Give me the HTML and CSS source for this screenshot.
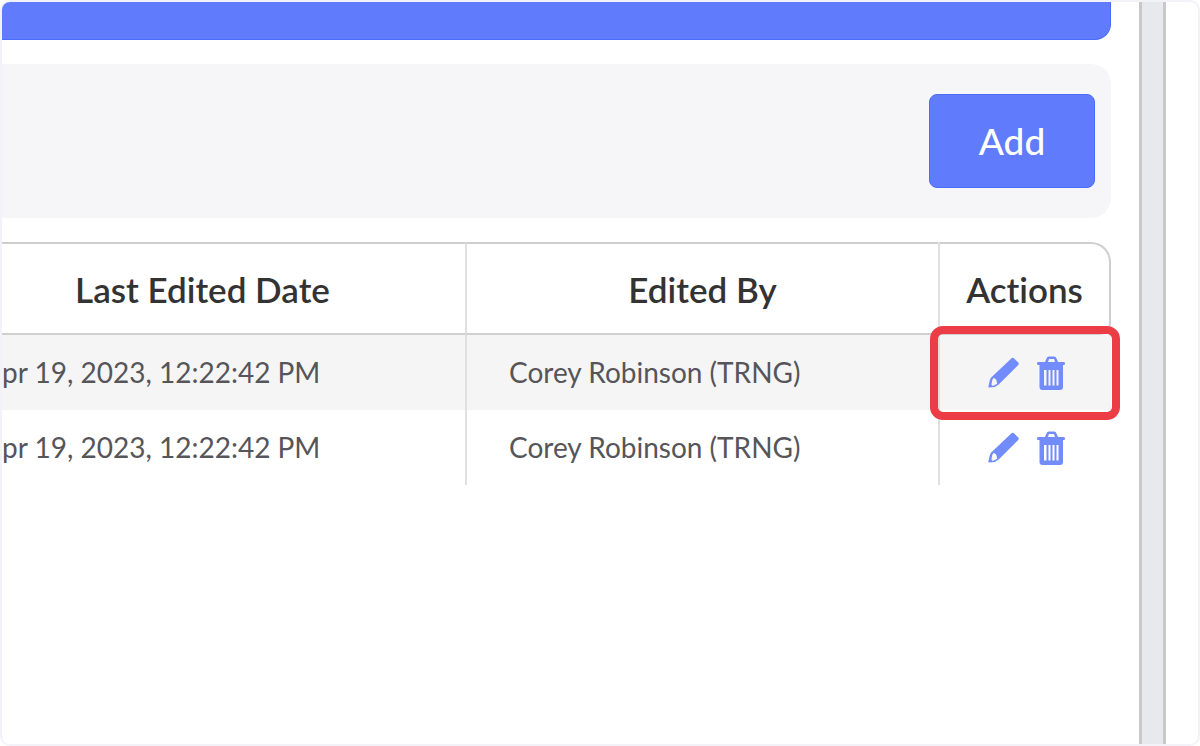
FILE: index.html
```html
<!DOCTYPE html>
<html lang="en">
<head>
  <meta charset="UTF-8" />
  <meta name="viewport" content="width=device-width, initial-scale=1.0" />
  <title>Edit History</title>
  <link rel="stylesheet" href="styles.css">
</head>
<body>
  <svg class="sprite" aria-hidden="true">
    <symbol id="pencil" viewBox="0 0 32 32">
      <path fill-rule="evenodd" d="M24 1.500 Q25.500 0 27 1.500 L31 5.500 Q32.500 7 31 8.500 L11 28.500 L7 31 L1 31.500 Q0 31.500 .5 30 L2 23.500 L3 21.500 Z M4.500 23.500 L3.500 28.500 L5 30 L9.500 27.500 L8.500 23.500 L6 21.500 Z" />
    </symbol>
    <symbol id="trash" viewBox="0 0 28 34">
      <path fill-rule="evenodd" d="M8 6 L9.500 2.500 Q10 .5 12 .5 H17 Q19 .5 19.500 2.500 L21 6 H27 Q28 6 28 7.500 Q28 9 27 9 H26 V31 Q26 34 23 34 H5.500 Q2.500 34 2.500 31 V9 H1 Q0 9 0 7.500 Q0 6 1 6 Z M11 6 H18 L17 3 H12 Z M7 14 V29.500 H9.500 V14 Z M11.500 14 V29.500 H13.500 V14 Z M15.500 14 V29.500 H17.500 V14 Z M19.500 14 V29.500 H21.500 V14 Z" />
    </symbol>
  </svg>

  <div class="frame">
    <main class="content">
      <div class="banner"></div>

      <div class="toolbar">
        <button class="add-btn" type="button">Add</button>
      </div>

      <table class="history">
        <colgroup>
          <col>
          <col class="col-editor">
          <col class="col-actions">
        </colgroup>
        <thead>
          <tr>
            <th class="date" scope="col">Last Edited Date</th>
            <th scope="col">Edited By</th>
            <th scope="col">Actions</th>
          </tr>
        </thead>
        <tbody>
          <tr class="striped">
            <td class="date">pr 19, 2023, 12:22:42 PM</td>
            <td>Corey Robinson (TRNG)</td>
            <td class="actions">
              <div class="icons">
                <button type="button" aria-label="Edit"><svg class="pencil"><use href="#pencil" /></svg></button>
                <button type="button" aria-label="Delete"><svg class="trash"><use href="#trash" /></svg></button>
              </div>
              <div class="highlight"></div>
            </td>
          </tr>
          <tr>
            <td class="date">pr 19, 2023, 12:22:42 PM</td>
            <td>Corey Robinson (TRNG)</td>
            <td class="actions">
              <div class="icons">
                <button type="button" aria-label="Edit"><svg class="pencil"><use href="#pencil" /></svg></button>
                <button type="button" aria-label="Delete"><svg class="trash"><use href="#trash" /></svg></button>
              </div>
            </td>
          </tr>
        </tbody>
      </table>
    </main>
    <div class="gutter"></div>
    <aside class="side"></aside>
  </div>
</body>
</html>
```

FILE: styles.css
```css
* {
  box-sizing: border-box;
}

body {
  margin: 0;
  background: #fff;
  color: #55555a;
  font-family: Lato, sans-serif;
  font-variant-ligatures: none;
}

.sprite {
  display: none;
}

.frame {
  display: flex;
  min-height: 100vh;
  border: 2px solid #f3f2f8;
  border-radius: 10px;
  overflow: hidden;
}

.content {
  flex: 1;
  display: flex;
  flex-direction: column;
  gap: 24px;
  padding-right: 28px;
}

.gutter {
  width: 27px;
  background: #e8e9ed;
  border: solid #c8c8ca;
  border-width: 0 3px;
}

.side {
  width: 32px;
}

.banner {
  height: 38px;
  background: #607cfd;
  border: solid #4a6cfb;
  border-width: 0 1px 1px 0;
  border-bottom-right-radius: 16px;
}

.toolbar {
  display: flex;
  justify-content: flex-end;
  padding: 30px 16px;
  background: #f6f6f9;
  border-radius: 0 20px 20px 0;
}

.add-btn {
  width: 166px;
  height: 94px;
  padding: 0 0 2px;
  background: #607cfd;
  border: 1px solid #4a6cfb;
  border-radius: 8px;
  color: #fff;
  font-family: inherit;
  font-size: 37px;
  font-weight: 500;
}

.history {
  width: 100%;
  table-layout: fixed;
  border-collapse: separate;
  border-spacing: 0;
}

.col-editor {
  width: 473px;
}

.col-actions {
  width: 173px;
}

th {
  height: 93px;
  padding: 0;
  border: solid #cfcfcf;
  border-width: 2px 0;
  color: #333;
  font-size: 35px;
  font-weight: 600;
}

th.date {
  padding: 0 62px 0 0;
}

th:last-child {
  border-right-width: 2px;
  border-radius: 0 20px 12px 0;
}

th + th,
td + td {
  border-left: 2px solid #e0e0e0;
}

td {
  height: 75px;
  padding: 0 0 2px 42px;
  font-size: 28px;
  white-space: nowrap;
}

td.date {
  padding-left: 0;
}

.striped td {
  background: #f5f5f5;
}

td.actions {
  position: relative;
  padding: 0 0 0 2px;
}

.icons {
  display: flex;
  align-items: center;
  justify-content: center;
  gap: 18px;
}

.icons button {
  padding: 0;
  background: none;
  border: 0;
  line-height: 0;
}

.icons svg {
  fill: #728cfd;
}

.pencil {
  width: 31px;
  height: 31px;
}

.trash {
  width: 28px;
  height: 34px;
}

/* ring around the row's action buttons */
.highlight {
  position: absolute;
  inset: -9px -9px -10px -10px;
  z-index: 1;
  border: 8px solid #ec3d47;
  border-radius: 13px;
  pointer-events: none;
}
```
